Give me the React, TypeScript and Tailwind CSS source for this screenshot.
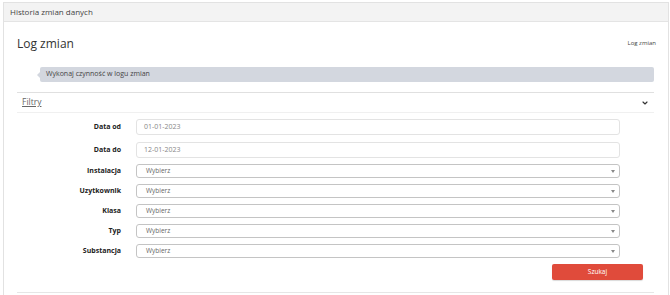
import { ChevronDown } from "lucide-react"

const textFields = [
  { label: "Data od", value: "01-01-2023" },
  { label: "Data do", value: "12-01-2023" },
]

const selectFields = ["Instalacja", "Uzytkownik", "Klasa", "Typ", "Substancja"]

export default function App() {
  return (
    <div className="w-[670px] h-[295px] bg-white overflow-hidden pl-[3px] pt-[2px] font-['Open_Sans',sans-serif] text-[#333]">
      <div className="w-[666px] h-[300px] border border-[#e2e2e2] bg-white">
        {/* Header */}
        <div className="h-[19px] bg-[#f3f3f3] border-b border-[#e4e4e4] px-[6px] flex items-center text-[8px] text-[#444]">
          Historia zmian danych
        </div>

        <div className="pl-[13px] pr-[14px]">
          {/* Title row */}
          <div className="flex items-center justify-between pt-[13px] h-[30px]">
            <h1 className="text-[12px] text-[#333]">Log zmian</h1>
            <span className="text-[6px] text-[#444] mr-[-2px]">Log zmian</span>
          </div>

          {/* Alert */}
          <div className="relative ml-[23px] mt-[15px] h-[15px] bg-[#d3d7df] rounded-[2px] flex items-center pl-[6px] text-[7px] text-[#444]">
            <span className="absolute left-[-3px] top-[5px] w-0 h-0 border-y-[3px] border-y-transparent border-r-[3px] border-r-[#d3d7df]" />
            Wykonaj czynność w logu zmian
          </div>

          {/* Filters */}
          <div className="mt-[10px] border-t border-[#e0e0e0]">
            <div className="h-[20px] flex items-center justify-between pl-[5px] pr-[5px] border-b border-[#f0f0f0]">
              <span className="text-[8.5px] text-[#666] underline">Filtry</span>
              <ChevronDown className="w-[8px] h-[8px] text-[#333]" strokeWidth={3.5} />
            </div>

            <div className="pt-[6px] flex flex-col">
              <div className="flex flex-col gap-[7px]">
                {textFields.map((f) => (
                  <div key={f.label} className="flex items-center">
                    <label className="w-[104px] text-right text-[7px] font-bold text-[#222]">{f.label}</label>
                    <div className="ml-[15px] w-[484px] h-[16px] border border-[#e3e3e3] rounded-[3px] flex items-center px-[7px] text-[7px] text-[#888]">
                      {f.value}
                    </div>
                  </div>
                ))}
              </div>

              <div className="mt-[6px] flex flex-col gap-[6px]">
                {selectFields.map((label) => (
                  <div key={label} className="flex items-center">
                    <label className="w-[104px] text-right text-[7px] font-bold text-[#222]">{label}</label>
                    <div className="ml-[15px] w-[484px] h-[14px] border border-[#c4c4c4] rounded-[3px] flex items-center justify-between pl-[9px] pr-[4px] text-[6.5px] text-[#666]">
                      <span>Wybierz</span>
                      <span className="w-0 h-0 border-x-[2px] border-x-transparent border-t-[3px] border-t-[#888]" />
                    </div>
                  </div>
                ))}
              </div>

              <div className="mt-[6px] flex justify-end pr-[11px]">
                <button className="w-[91px] h-[16px] bg-[#e04b3b] rounded-[2px] text-white text-[6.5px] shadow-[0_1px_1px_rgba(0,0,0,0.15)]">
                  Szukaj
                </button>
              </div>
            </div>

            <div className="mt-[12px] border-t border-[#e6e6e6]" />
          </div>
        </div>
      </div>
    </div>
  )
}
